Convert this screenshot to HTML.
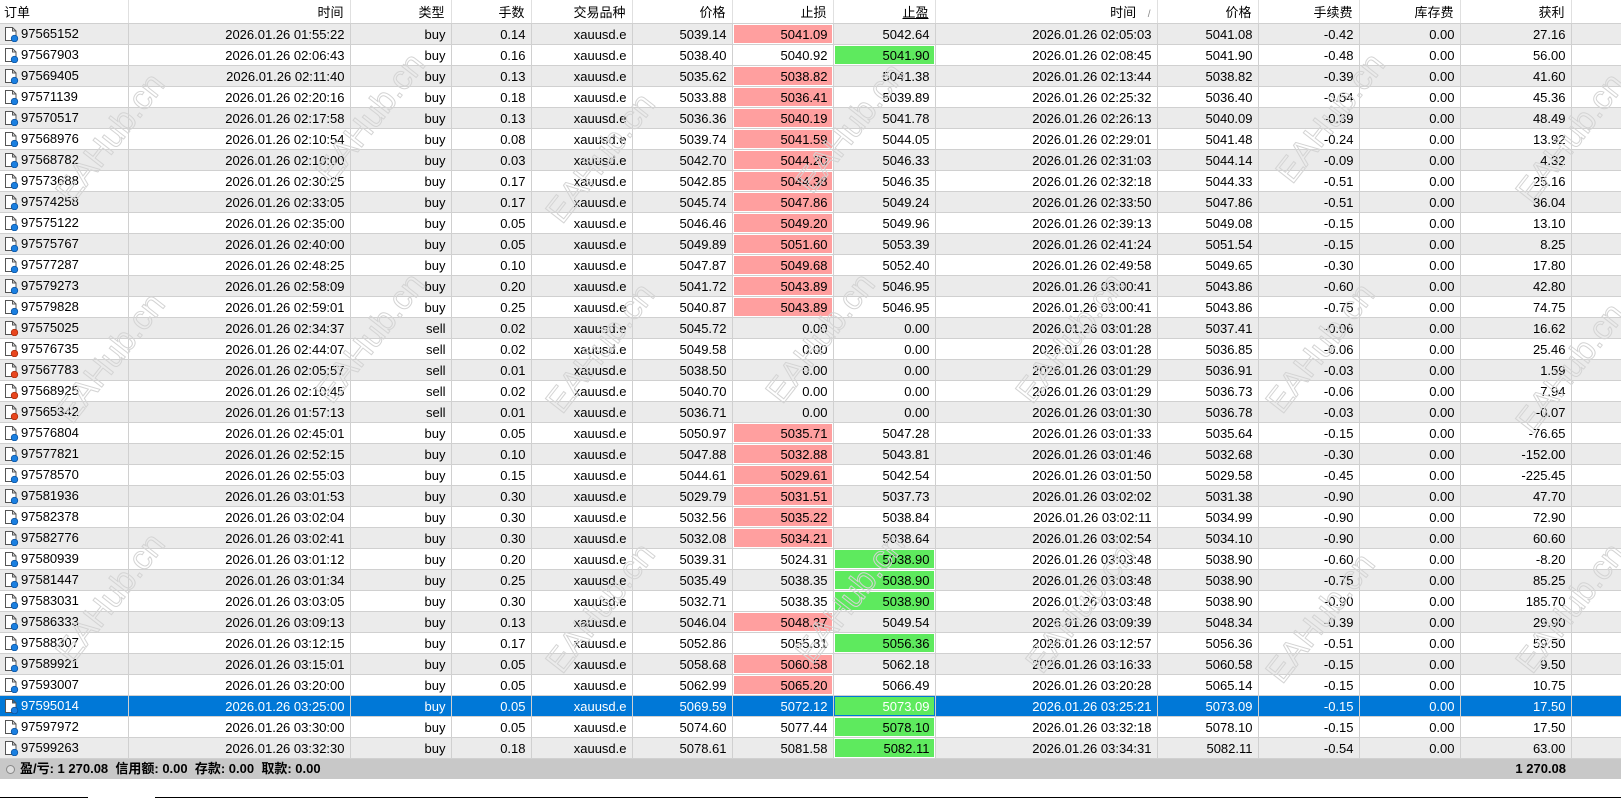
<!DOCTYPE html>
<html><head><meta charset="utf-8"><style>
body{margin:0;width:1621px;height:799px;background:#fff;overflow:hidden;position:relative;font-family:"Liberation Sans","Noto Sans CJK SC",sans-serif;font-size:13px;color:#000}
table{border-collapse:collapse;table-layout:fixed;position:absolute;left:0;top:0;width:1621px}
th{height:23px;font-weight:normal;text-align:right;padding:0 6px 0 0;border-right:1px solid #e0e0e0;border-bottom:1px solid #d0d0d0;white-space:nowrap}
td{height:20px;padding:0 5px 0 0;text-align:right;border-right:1px solid #d0d0d0;border-bottom:1px solid #d0d0d0;white-space:nowrap;overflow:hidden}
tr.g td{background:#ebebeb}
tr.s td{background:#0078d7;color:#fff}
td.p{background:#ff9f9f!important;box-shadow:inset 0 0 0 1px #fff;color:#000}
td.q{background:#5eea5e!important;box-shadow:inset 0 0 0 1px #fff;color:#000}
tr.s td.q{box-shadow:inset 0 0 0 1px #0078d7}
td.o{text-align:left;padding:0}
td.o svg{vertical-align:middle;margin:0 2px 0 3px}
td.e,th.e{border-right:none}
.ft{position:absolute;left:0;top:759px;width:1621px;height:20px;background:#c8c8c8;font-weight:bold;line-height:20px}
.wm{position:absolute;width:150px;text-align:center;font-size:34px;color:transparent;-webkit-text-stroke:1px #d4d4d4;transform:rotate(-52deg);white-space:nowrap;font-family:"Liberation Sans",sans-serif;pointer-events:none}
</style></head><body>
<svg width="0" height="0" style="position:absolute"><defs>
<symbol id="b" viewBox="0 0 16 16"><path d="M2.5 1.5h7l3.5 3.5v9.5h-10.5z M9.5 1.5v3.5h3.5" fill="#fff" stroke="#555" stroke-width="1"/><circle cx="11.5" cy="12.5" r="3.3" fill="#1a7fe0" stroke="#0a4f9a" stroke-width=".7"/></symbol>
<symbol id="r" viewBox="0 0 16 16"><path d="M2.5 1.5h7l3.5 3.5v9.5h-10.5z M9.5 1.5v3.5h3.5" fill="#fff" stroke="#555" stroke-width="1"/><circle cx="11.5" cy="12.5" r="3.3" fill="#e8461e" stroke="#a52a0a" stroke-width=".7"/></symbol>
</defs></svg>
<table>
<colgroup><col style="width:128px"><col style="width:222px"><col style="width:101px"><col style="width:80px"><col style="width:101px"><col style="width:100px"><col style="width:101px"><col style="width:102px"><col style="width:222px"><col style="width:101px"><col style="width:101px"><col style="width:101px"><col style="width:111px"><col style="width:50px"></colgroup>
<tr><th style="text-align:left;padding-left:4px">订单</th><th>时间</th><th>类型</th><th>手数</th><th>交易品种</th><th>价格</th><th>止损</th><th><u>止盈</u></th><th>时间 <span style="color:#888;font-size:10px;margin-left:8px">/</span></th><th>价格</th><th>手续费</th><th>库存费</th><th>获利</th><th class="e"></th></tr>
<tr class="g"><td class="o"><svg width="16" height="16"><use href="#b"/></svg>97565152</td><td>2026.01.26 01:55:22</td><td>buy</td><td>0.14</td><td>xauusd.e</td><td>5039.14</td><td class="p">5041.09</td><td>5042.64</td><td>2026.01.26 02:05:03</td><td>5041.08</td><td>-0.42</td><td>0.00</td><td>27.16</td><td class="e"></td></tr>
<tr><td class="o"><svg width="16" height="16"><use href="#b"/></svg>97567903</td><td>2026.01.26 02:06:43</td><td>buy</td><td>0.16</td><td>xauusd.e</td><td>5038.40</td><td>5040.92</td><td class="q">5041.90</td><td>2026.01.26 02:08:45</td><td>5041.90</td><td>-0.48</td><td>0.00</td><td>56.00</td><td class="e"></td></tr>
<tr class="g"><td class="o"><svg width="16" height="16"><use href="#b"/></svg>97569405</td><td>2026.01.26 02:11:40</td><td>buy</td><td>0.13</td><td>xauusd.e</td><td>5035.62</td><td class="p">5038.82</td><td>5041.38</td><td>2026.01.26 02:13:44</td><td>5038.82</td><td>-0.39</td><td>0.00</td><td>41.60</td><td class="e"></td></tr>
<tr><td class="o"><svg width="16" height="16"><use href="#b"/></svg>97571139</td><td>2026.01.26 02:20:16</td><td>buy</td><td>0.18</td><td>xauusd.e</td><td>5033.88</td><td class="p">5036.41</td><td>5039.89</td><td>2026.01.26 02:25:32</td><td>5036.40</td><td>-0.54</td><td>0.00</td><td>45.36</td><td class="e"></td></tr>
<tr class="g"><td class="o"><svg width="16" height="16"><use href="#b"/></svg>97570517</td><td>2026.01.26 02:17:58</td><td>buy</td><td>0.13</td><td>xauusd.e</td><td>5036.36</td><td class="p">5040.19</td><td>5041.78</td><td>2026.01.26 02:26:13</td><td>5040.09</td><td>-0.39</td><td>0.00</td><td>48.49</td><td class="e"></td></tr>
<tr><td class="o"><svg width="16" height="16"><use href="#b"/></svg>97568976</td><td>2026.01.26 02:10:54</td><td>buy</td><td>0.08</td><td>xauusd.e</td><td>5039.74</td><td class="p">5041.59</td><td>5044.05</td><td>2026.01.26 02:29:01</td><td>5041.48</td><td>-0.24</td><td>0.00</td><td>13.92</td><td class="e"></td></tr>
<tr class="g"><td class="o"><svg width="16" height="16"><use href="#b"/></svg>97568782</td><td>2026.01.26 02:10:00</td><td>buy</td><td>0.03</td><td>xauusd.e</td><td>5042.70</td><td class="p">5044.20</td><td>5046.33</td><td>2026.01.26 02:31:03</td><td>5044.14</td><td>-0.09</td><td>0.00</td><td>4.32</td><td class="e"></td></tr>
<tr><td class="o"><svg width="16" height="16"><use href="#b"/></svg>97573688</td><td>2026.01.26 02:30:25</td><td>buy</td><td>0.17</td><td>xauusd.e</td><td>5042.85</td><td class="p">5044.38</td><td>5046.35</td><td>2026.01.26 02:32:18</td><td>5044.33</td><td>-0.51</td><td>0.00</td><td>25.16</td><td class="e"></td></tr>
<tr class="g"><td class="o"><svg width="16" height="16"><use href="#b"/></svg>97574258</td><td>2026.01.26 02:33:05</td><td>buy</td><td>0.17</td><td>xauusd.e</td><td>5045.74</td><td class="p">5047.86</td><td>5049.24</td><td>2026.01.26 02:33:50</td><td>5047.86</td><td>-0.51</td><td>0.00</td><td>36.04</td><td class="e"></td></tr>
<tr><td class="o"><svg width="16" height="16"><use href="#b"/></svg>97575122</td><td>2026.01.26 02:35:00</td><td>buy</td><td>0.05</td><td>xauusd.e</td><td>5046.46</td><td class="p">5049.20</td><td>5049.96</td><td>2026.01.26 02:39:13</td><td>5049.08</td><td>-0.15</td><td>0.00</td><td>13.10</td><td class="e"></td></tr>
<tr class="g"><td class="o"><svg width="16" height="16"><use href="#b"/></svg>97575767</td><td>2026.01.26 02:40:00</td><td>buy</td><td>0.05</td><td>xauusd.e</td><td>5049.89</td><td class="p">5051.60</td><td>5053.39</td><td>2026.01.26 02:41:24</td><td>5051.54</td><td>-0.15</td><td>0.00</td><td>8.25</td><td class="e"></td></tr>
<tr><td class="o"><svg width="16" height="16"><use href="#b"/></svg>97577287</td><td>2026.01.26 02:48:25</td><td>buy</td><td>0.10</td><td>xauusd.e</td><td>5047.87</td><td class="p">5049.68</td><td>5052.40</td><td>2026.01.26 02:49:58</td><td>5049.65</td><td>-0.30</td><td>0.00</td><td>17.80</td><td class="e"></td></tr>
<tr class="g"><td class="o"><svg width="16" height="16"><use href="#b"/></svg>97579273</td><td>2026.01.26 02:58:09</td><td>buy</td><td>0.20</td><td>xauusd.e</td><td>5041.72</td><td class="p">5043.89</td><td>5046.95</td><td>2026.01.26 03:00:41</td><td>5043.86</td><td>-0.60</td><td>0.00</td><td>42.80</td><td class="e"></td></tr>
<tr><td class="o"><svg width="16" height="16"><use href="#b"/></svg>97579828</td><td>2026.01.26 02:59:01</td><td>buy</td><td>0.25</td><td>xauusd.e</td><td>5040.87</td><td class="p">5043.89</td><td>5046.95</td><td>2026.01.26 03:00:41</td><td>5043.86</td><td>-0.75</td><td>0.00</td><td>74.75</td><td class="e"></td></tr>
<tr class="g"><td class="o"><svg width="16" height="16"><use href="#r"/></svg>97575025</td><td>2026.01.26 02:34:37</td><td>sell</td><td>0.02</td><td>xauusd.e</td><td>5045.72</td><td>0.00</td><td>0.00</td><td>2026.01.26 03:01:28</td><td>5037.41</td><td>-0.06</td><td>0.00</td><td>16.62</td><td class="e"></td></tr>
<tr><td class="o"><svg width="16" height="16"><use href="#r"/></svg>97576735</td><td>2026.01.26 02:44:07</td><td>sell</td><td>0.02</td><td>xauusd.e</td><td>5049.58</td><td>0.00</td><td>0.00</td><td>2026.01.26 03:01:28</td><td>5036.85</td><td>-0.06</td><td>0.00</td><td>25.46</td><td class="e"></td></tr>
<tr class="g"><td class="o"><svg width="16" height="16"><use href="#r"/></svg>97567783</td><td>2026.01.26 02:05:57</td><td>sell</td><td>0.01</td><td>xauusd.e</td><td>5038.50</td><td>0.00</td><td>0.00</td><td>2026.01.26 03:01:29</td><td>5036.91</td><td>-0.03</td><td>0.00</td><td>1.59</td><td class="e"></td></tr>
<tr><td class="o"><svg width="16" height="16"><use href="#r"/></svg>97568925</td><td>2026.01.26 02:10:45</td><td>sell</td><td>0.02</td><td>xauusd.e</td><td>5040.70</td><td>0.00</td><td>0.00</td><td>2026.01.26 03:01:29</td><td>5036.73</td><td>-0.06</td><td>0.00</td><td>7.94</td><td class="e"></td></tr>
<tr class="g"><td class="o"><svg width="16" height="16"><use href="#r"/></svg>97565342</td><td>2026.01.26 01:57:13</td><td>sell</td><td>0.01</td><td>xauusd.e</td><td>5036.71</td><td>0.00</td><td>0.00</td><td>2026.01.26 03:01:30</td><td>5036.78</td><td>-0.03</td><td>0.00</td><td>-0.07</td><td class="e"></td></tr>
<tr><td class="o"><svg width="16" height="16"><use href="#b"/></svg>97576804</td><td>2026.01.26 02:45:01</td><td>buy</td><td>0.05</td><td>xauusd.e</td><td>5050.97</td><td class="p">5035.71</td><td>5047.28</td><td>2026.01.26 03:01:33</td><td>5035.64</td><td>-0.15</td><td>0.00</td><td>-76.65</td><td class="e"></td></tr>
<tr class="g"><td class="o"><svg width="16" height="16"><use href="#b"/></svg>97577821</td><td>2026.01.26 02:52:15</td><td>buy</td><td>0.10</td><td>xauusd.e</td><td>5047.88</td><td class="p">5032.88</td><td>5043.81</td><td>2026.01.26 03:01:46</td><td>5032.68</td><td>-0.30</td><td>0.00</td><td>-152.00</td><td class="e"></td></tr>
<tr><td class="o"><svg width="16" height="16"><use href="#b"/></svg>97578570</td><td>2026.01.26 02:55:03</td><td>buy</td><td>0.15</td><td>xauusd.e</td><td>5044.61</td><td class="p">5029.61</td><td>5042.54</td><td>2026.01.26 03:01:50</td><td>5029.58</td><td>-0.45</td><td>0.00</td><td>-225.45</td><td class="e"></td></tr>
<tr class="g"><td class="o"><svg width="16" height="16"><use href="#b"/></svg>97581936</td><td>2026.01.26 03:01:53</td><td>buy</td><td>0.30</td><td>xauusd.e</td><td>5029.79</td><td class="p">5031.51</td><td>5037.73</td><td>2026.01.26 03:02:02</td><td>5031.38</td><td>-0.90</td><td>0.00</td><td>47.70</td><td class="e"></td></tr>
<tr><td class="o"><svg width="16" height="16"><use href="#b"/></svg>97582378</td><td>2026.01.26 03:02:04</td><td>buy</td><td>0.30</td><td>xauusd.e</td><td>5032.56</td><td class="p">5035.22</td><td>5038.84</td><td>2026.01.26 03:02:11</td><td>5034.99</td><td>-0.90</td><td>0.00</td><td>72.90</td><td class="e"></td></tr>
<tr class="g"><td class="o"><svg width="16" height="16"><use href="#b"/></svg>97582776</td><td>2026.01.26 03:02:41</td><td>buy</td><td>0.30</td><td>xauusd.e</td><td>5032.08</td><td class="p">5034.21</td><td>5038.64</td><td>2026.01.26 03:02:54</td><td>5034.10</td><td>-0.90</td><td>0.00</td><td>60.60</td><td class="e"></td></tr>
<tr><td class="o"><svg width="16" height="16"><use href="#b"/></svg>97580939</td><td>2026.01.26 03:01:12</td><td>buy</td><td>0.20</td><td>xauusd.e</td><td>5039.31</td><td>5024.31</td><td class="q">5038.90</td><td>2026.01.26 03:03:48</td><td>5038.90</td><td>-0.60</td><td>0.00</td><td>-8.20</td><td class="e"></td></tr>
<tr class="g"><td class="o"><svg width="16" height="16"><use href="#b"/></svg>97581447</td><td>2026.01.26 03:01:34</td><td>buy</td><td>0.25</td><td>xauusd.e</td><td>5035.49</td><td>5038.35</td><td class="q">5038.90</td><td>2026.01.26 03:03:48</td><td>5038.90</td><td>-0.75</td><td>0.00</td><td>85.25</td><td class="e"></td></tr>
<tr><td class="o"><svg width="16" height="16"><use href="#b"/></svg>97583031</td><td>2026.01.26 03:03:05</td><td>buy</td><td>0.30</td><td>xauusd.e</td><td>5032.71</td><td>5038.35</td><td class="q">5038.90</td><td>2026.01.26 03:03:48</td><td>5038.90</td><td>-0.90</td><td>0.00</td><td>185.70</td><td class="e"></td></tr>
<tr class="g"><td class="o"><svg width="16" height="16"><use href="#b"/></svg>97586333</td><td>2026.01.26 03:09:13</td><td>buy</td><td>0.13</td><td>xauusd.e</td><td>5046.04</td><td class="p">5048.37</td><td>5049.54</td><td>2026.01.26 03:09:39</td><td>5048.34</td><td>-0.39</td><td>0.00</td><td>29.90</td><td class="e"></td></tr>
<tr><td class="o"><svg width="16" height="16"><use href="#b"/></svg>97588307</td><td>2026.01.26 03:12:15</td><td>buy</td><td>0.17</td><td>xauusd.e</td><td>5052.86</td><td>5055.81</td><td class="q">5056.36</td><td>2026.01.26 03:12:57</td><td>5056.36</td><td>-0.51</td><td>0.00</td><td>59.50</td><td class="e"></td></tr>
<tr class="g"><td class="o"><svg width="16" height="16"><use href="#b"/></svg>97589921</td><td>2026.01.26 03:15:01</td><td>buy</td><td>0.05</td><td>xauusd.e</td><td>5058.68</td><td class="p">5060.58</td><td>5062.18</td><td>2026.01.26 03:16:33</td><td>5060.58</td><td>-0.15</td><td>0.00</td><td>9.50</td><td class="e"></td></tr>
<tr><td class="o"><svg width="16" height="16"><use href="#b"/></svg>97593007</td><td>2026.01.26 03:20:00</td><td>buy</td><td>0.05</td><td>xauusd.e</td><td>5062.99</td><td class="p">5065.20</td><td>5066.49</td><td>2026.01.26 03:20:28</td><td>5065.14</td><td>-0.15</td><td>0.00</td><td>10.75</td><td class="e"></td></tr>
<tr class="s"><td class="o"><svg width="16" height="16"><use href="#b"/></svg>97595014</td><td>2026.01.26 03:25:00</td><td>buy</td><td>0.05</td><td>xauusd.e</td><td>5069.59</td><td>5072.12</td><td class="q">5073.09</td><td>2026.01.26 03:25:21</td><td>5073.09</td><td>-0.15</td><td>0.00</td><td>17.50</td><td class="e"></td></tr>
<tr><td class="o"><svg width="16" height="16"><use href="#b"/></svg>97597972</td><td>2026.01.26 03:30:00</td><td>buy</td><td>0.05</td><td>xauusd.e</td><td>5074.60</td><td>5077.44</td><td class="q">5078.10</td><td>2026.01.26 03:32:18</td><td>5078.10</td><td>-0.15</td><td>0.00</td><td>17.50</td><td class="e"></td></tr>
<tr class="g"><td class="o"><svg width="16" height="16"><use href="#b"/></svg>97599263</td><td>2026.01.26 03:32:30</td><td>buy</td><td>0.18</td><td>xauusd.e</td><td>5078.61</td><td>5081.58</td><td class="q">5082.11</td><td>2026.01.26 03:34:31</td><td>5082.11</td><td>-0.54</td><td>0.00</td><td>63.00</td><td class="e"></td></tr>
</table>
<div class="ft"><span style="position:absolute;left:6px;top:6px;width:7px;height:7px;border-radius:50%;border:1px solid #888;background:#ddd"></span><span style="position:absolute;left:20px">盈/亏: 1 270.08&nbsp;&nbsp;信用额: 0.00&nbsp;&nbsp;存款: 0.00&nbsp;&nbsp;取款: 0.00</span><span style="position:absolute;right:55px">1 270.08</span></div>
<div style="position:absolute;left:0;top:797px;width:88px;height:1px;background:#000"></div>
<div style="position:absolute;left:155px;top:797px;width:1466px;height:1px;background:#000"></div>
<div class="wm" style="left:35px;top:120px">EAHub.cn</div>
<div class="wm" style="left:295px;top:100px">EAHub.cn</div>
<div class="wm" style="left:525px;top:140px">EAHub.cn</div>
<div class="wm" style="left:775px;top:110px">EAHub.cn</div>
<div class="wm" style="left:1255px;top:100px">EAHub.cn</div>
<div class="wm" style="left:1495px;top:120px">EAHub.cn</div>
<div class="wm" style="left:35px;top:340px">EAHub.cn</div>
<div class="wm" style="left:295px;top:320px">EAHub.cn</div>
<div class="wm" style="left:525px;top:330px">EAHub.cn</div>
<div class="wm" style="left:745px;top:320px">EAHub.cn</div>
<div class="wm" style="left:995px;top:320px">EAHub.cn</div>
<div class="wm" style="left:1245px;top:330px">EAHub.cn</div>
<div class="wm" style="left:1495px;top:350px">EAHub.cn</div>
<div class="wm" style="left:35px;top:580px">EAHub.cn</div>
<div class="wm" style="left:525px;top:590px">EAHub.cn</div>
<div class="wm" style="left:775px;top:580px">EAHub.cn</div>
<div class="wm" style="left:1005px;top:590px">EAHub.cn</div>
<div class="wm" style="left:1245px;top:600px">EAHub.cn</div>
<div class="wm" style="left:1495px;top:590px">EAHub.cn</div>
</body></html>
